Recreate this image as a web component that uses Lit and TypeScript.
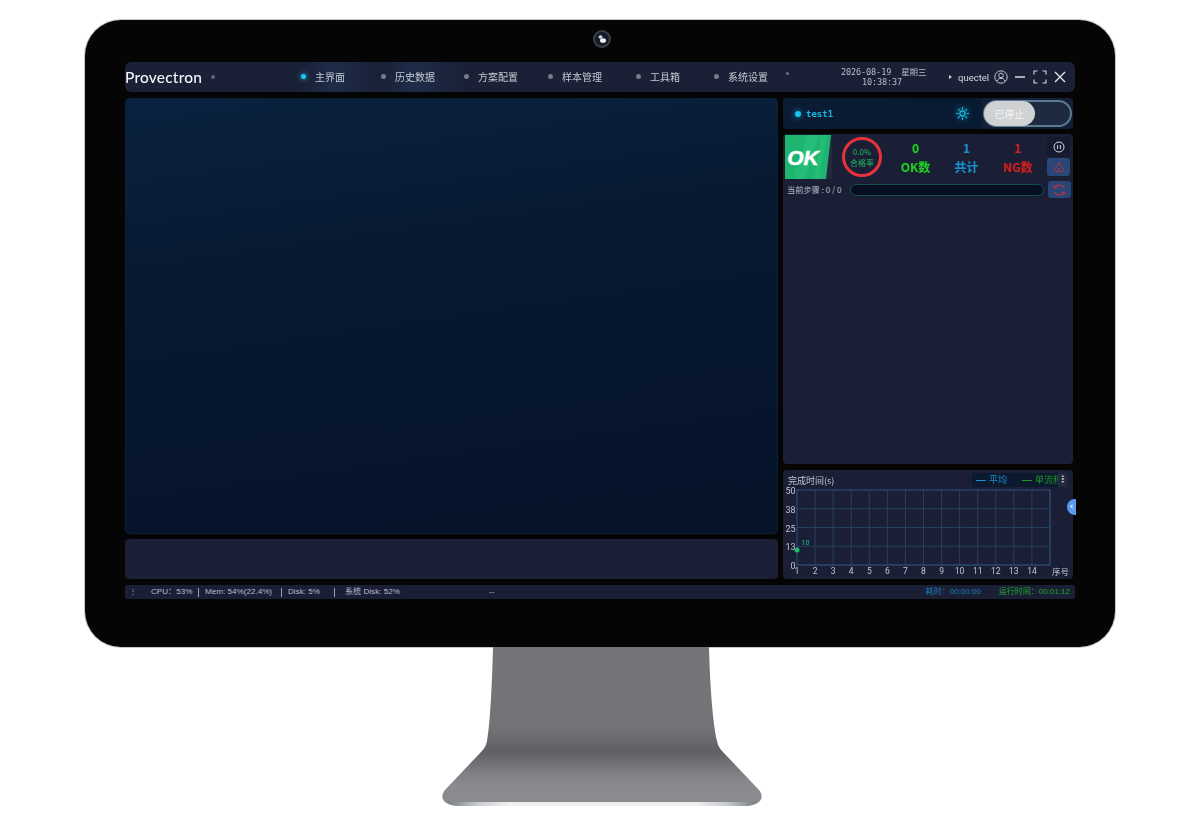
import { LitElement, html, css, svg } from "lit";
import { customElement } from "lit/decorators.js";

const NAV = ["主界面", "历史数据", "方案配置", "样本管理", "工具箱", "系统设置"];
const CJK = css`"Noto Sans CJK SC", "Noto Sans", sans-serif`;

@customElement("app-root")
export class AppRoot extends LitElement {
  static styles = css`
    :host { display: block; width: 1200px; height: 830px; background: #fff; overflow: hidden; font-family: "Roboto", "Noto Sans CJK SC", sans-serif; color: #c9cdd6; }
    * { box-sizing: border-box; }
    .monitor { width: 1030px; height: 627px; margin: 20px 0 0 85px; background: #050505; border-radius: 36px; box-shadow: 0 0 0 1px #c9c9c9; padding: 10px 40px 0; display: flex; flex-direction: column; }
    .camera { width: 18px; height: 18px; align-self: center; margin: 0 0 14px 4px; flex: none; display: block; filter: blur(0.4px); }
    .screen { width: 950px; display: flex; flex-direction: column; gap: 6px; filter: blur(0.35px); }

    .top { height: 30px; border-radius: 6px; background: #1a2036; display: flex; align-items: center; position: relative; overflow: hidden; }
    .logo { width: 88px; font: 500 15.5px "Lato", sans-serif; color: #f2f4f8; letter-spacing: 0.2px; display: flex; align-items: center; flex: none; }
    .logo i { width: 4px; height: 4px; background: #5d6474; border-radius: 50%; margin-left: 9px; flex: none; }
    .nav { display: grid; grid-template-columns: 80px 83px 84px 88px 78px 75px; margin-left: 88px; flex: none; }
    .nav-item { display: flex; align-items: center; gap: 9px; font: 10px ${CJK}; color: #c5c9d1; position: relative; height: 30px; padding-bottom: 1px; }
    .nav-item::before { content: ""; width: 5px; height: 5px; border-radius: 50%; background: #767c88; flex: none; }
    .nav-item.on::before { background: #1ec4f4; box-shadow: 0 0 5px #1ec4f4; }
    .nav-item.on, .nav-item.glow { background: linear-gradient(90deg, transparent, rgba(40,90,140,.22) 40%, transparent); }
    .tiny { width: 3px; height: 3px; border-radius: 50%; background: #6a7080; margin-left: -3px; margin-top: -8px; flex: none; }
    .clock { margin-left: 52px; width: 82px; font: 8.5px/10px "DejaVu Sans Mono", ${CJK}; color: #b9bec8; text-align: center; white-space: pre; letter-spacing: -.1px; flex: none; }
    .user { margin-left: 26px; display: flex; align-items: center; font: 9.5px "Roboto", sans-serif; color: #d5d8de; flex: none; }
    .user b { width: 0; height: 0; border-left: 3px solid #d5d8de; border-top: 2px solid transparent; border-bottom: 2px solid transparent; margin-right: 6px; }
    .user svg { margin-left: 5px; }
    .win { display: flex; align-items: center; gap: 6px; margin-left: 6px; flex: none; }
    .win svg { display: block; }
    .win .fs { margin-left: 1px; }

    .body { height: 481px; display: grid; grid-template-columns: 653px 290px; gap: 5px; }
    .col { display: flex; flex-direction: column; min-width: 0; }
    .col.l { gap: 5px; }
    .col.r { gap: 5px; position: relative; }
    .main { height: 436px; border-radius: 4px; background: linear-gradient(172deg, #0a2240 0%, #07182f 40%, #051329 100%); border: 1px solid #0a2038; }
    .lower { height: 40px; border-radius: 4px; background: #1a1f35; }

    .head { height: 31px; border-radius: 4px; background: linear-gradient(90deg, #0a1b33, #081a32 68%, #141e36 69%); display: flex; align-items: center; padding: 0 1px 0 12px; }
    .pulse { width: 6px; height: 6px; border-radius: 50%; background: #17c4ec; box-shadow: 0 0 5px 2px rgba(23,196,236,.3); flex: none; }
    .name { font: bold 9px "DejaVu Sans Mono", monospace; color: #17b8dd; margin-left: 5px; flex: 1; }
    .sun { margin-right: 14px; filter: drop-shadow(0 0 3px #17b8dd); display: block; }
    .switch { width: 89px; height: 27px; border-radius: 14px; border: 2px solid #5c7d92; background: #1e2a40; flex: none; display: flex; }
    .knob { width: 51px; margin: -1px 0 -1px -1px; border-radius: 13px; background: #cfd1d3; color: #f4f5f6; font: 10px/25px ${CJK}; text-align: center; }

    .card { height: 330px; border-radius: 4px; background: #1a1f35; padding: 1px 3px 0 2px; display: flex; flex-direction: column; gap: 2px; }
    .result { display: flex; height: 44px; align-items: center; }
    .ok { width: 47px; height: 44px; flex: none; display: block; }
    .gauge { width: 40px; height: 40px; border-radius: 50%; border: 3px solid #e7313c; margin-left: 10px; display: flex; flex-direction: column; align-items: center; justify-content: center; font: 8px/11px ${CJK}; color: #21b25e; flex: none; }
    .stats { display: grid; grid-template-columns: 51px 51px 51px; margin-left: 8px; flex: none; }
    .stat { display: flex; flex-direction: column; align-items: center; font: 700 12px/18px ${CJK}; gap: 1px; }
    .stat.g { color: #1fd01f; } .stat.b { color: #1a8fd0; } .stat.n { color: #d01e1e; }
    .tools { margin-left: 4px; width: 23px; display: flex; flex-direction: column; gap: 1px; flex: none; align-self: flex-start; margin-top: 2px; }
    .tool { height: 18px; border-radius: 3px; background: #2a4677; display: flex; align-items: center; justify-content: center; }
    .tool.dark { height: 20px; background: #161a2e; }
    .step { display: flex; align-items: center; font: 8.2px ${CJK}; color: #b8bcc6; height: 17px; padding-left: 2px; }
    .step-label { width: 63px; white-space: nowrap; flex: none; padding-bottom: 1px; }
    .bar { width: 194px; height: 12px; border-radius: 6px; border: 1px solid #12504f; background: #060f20; flex: none; }
    .step .tool { margin-left: 4px; width: 23px; height: 17px; flex: none; }

    .chart { height: 109px; margin-top: 1px; border-radius: 4px; background: #1a1f35; }
    .chart-head { height: 16px; display: flex; justify-content: space-between; padding: 3px 6px 0 5px; }
    .title { font: 9px/15px ${CJK}; color: #c2c6cf; }
    .legend { width: 95px; height: 14px; border-radius: 2px; background: #0c1a30; display: flex; align-items: center; font: 9px/14px ${CJK}; white-space: nowrap; padding-left: 4px; }
    .legend-items { width: 82px; display: flex; overflow: hidden; flex: none; }
    .legend span { display: inline-flex; align-items: center; gap: 3px; flex: none; }
    .legend i { width: 10px; height: 1px; background: currentColor; display: block; }
    .legend .avg { color: #1a8fd0; width: 46px; } .legend .single { color: #1c9a22; }
    .more { width: 9px; height: 14px; background: #232a3d; color: #d5d8de; font: bold 9px/13px "DejaVu Sans", sans-serif; text-align: center; flex: none; }
    .chart svg { display: block; }
    .chart text { font-family: "Roboto", ${CJK}; }
    .side { position: absolute; right: -3px; top: 401px; width: 9px; height: 16px; border-radius: 8px 0 0 8px; background: #5a9bf0; color: #fff; font: bold 9px/15px "DejaVu Sans", sans-serif; text-align: center; }

    .status { height: 14px; border-radius: 2px; background: #1a1f35; display: flex; align-items: center; font: 8.1px/14px "Liberation Sans", ${CJK}; color: #b9bdc7; white-space: nowrap; position: relative; }
    .status .m { width: 26px; padding-left: 4px; flex: none; }
    .status .sec { flex: none; }
    .status .cpu { width: 47px; }
    .status .mem { width: 82px; padding-left: 6px; }
    .status .disk { width: 52px; padding-left: 6px; }
    .status .sys { width: 154px; padding-left: 10px; }
    .status .sep { width: 1px; height: 9px; background: #9ca1ac; flex: none; }
    .status .right { margin-left: auto; display: flex; gap: 18px; padding-right: 5px; font: 8px/14px "Liberation Sans", ${CJK}; }
    .status .t1 { color: #1a7bb4; } .status .t2 { color: #1fa42a; }

    .stand { display: block; width: 1200px; height: 183px; }
  `;

  private grid() {
    const xs = Array.from({ length: 15 }, (_, i) => 14 + i * 18.07);
    const ys = [4, 22.75, 41.5, 60.25, 79];
    const yl = ["50", "38", "25", "13", "0"];
    return svg`
      ${xs.slice(1).map((x) => svg`<line x1=${x} x2=${x} y1="4" y2="79" stroke="#25405f" stroke-width="1"/>`)}
      ${ys.slice(1).map((y) => svg`<line x1="14" x2="267" y1=${y} y2=${y} stroke="#25405f" stroke-width="1"/>`)}
      <rect x="14" y="4" width="253" height="75" fill="none" stroke="#2a4a70" stroke-width="1.2"/>
      ${yl.map((t, i) => svg`<text x="12.5" y=${ys[i] + 4} text-anchor="end" font-size="9" fill="#c2c6cf">${t}</text>`)}
      ${xs.slice(0, 14).map((x, i) => svg`<text x=${x} y="88" text-anchor="middle" font-size="8.5" fill="#c2c6cf">${i + 1}</text>`)}
      <text x="269" y="89" font-size="8.5" fill="#c2c6cf">序号</text>
      <circle cx="14" cy="64" r="2.5" fill="#16c06c"/>
      <text x="18.5" y="59" font-size="7" fill="#16c08c">10</text>
    `;
  }

  render() {
    return html`
      <div class="monitor">
        <svg class="camera" viewBox="0 0 18 18">
          <circle cx="9" cy="9" r="9" fill="#3a3f4a"/>
          <circle cx="9" cy="9" r="7" fill="#141c2a"/>
          <ellipse cx="7.5" cy="7" rx="2" ry="1.7" fill="#cfd8e2"/>
          <ellipse cx="10" cy="10.5" rx="3" ry="2.3" fill="#f4f6f8"/>
        </svg>
        <div class="screen">
          <div class="top">
            <div class="logo">Provectron<i></i></div>
            <div class="nav">
              ${NAV.map((n, i) => html`<div class="nav-item ${i === 0 ? "on" : i === 1 ? "glow" : ""}">${n}</div>`)}
            </div>
            <div class="tiny"></div>
            <div class="clock">2026-08-19  星期三
10:38:37</div>
            <div class="user"><b></b>quectel
              <svg width="14" height="14" viewBox="0 0 14 14" fill="none" stroke="#c9ccd3" stroke-width="1"><circle cx="7" cy="7" r="6.2"/><circle cx="7" cy="5.4" r="2.3"/><path d="M2.9 11.2c.8-2 2.3-2.9 4.1-2.9s3.3.9 4.1 2.9"/></svg>
            </div>
            <div class="win">
              <svg width="12" height="12" viewBox="0 0 12 12" stroke="#d8dbe1" stroke-width="1.6"><path d="M1 6h10"/></svg>
              <svg class="fs" width="14" height="14" viewBox="0 0 14 14" fill="none" stroke="#d8dbe1" stroke-width="1.1"><path d="M1 4.5V1h3.5M9.5 1H13v3.5M13 9.5V13H9.5M4.5 13H1V9.5"/></svg>
              <svg width="14" height="14" viewBox="0 0 14 14" fill="none" stroke="#e2e4e9" stroke-width="1.4"><path d="M2 2l10 10M12 2L2 12"/></svg>
            </div>
          </div>

          <div class="body">
            <div class="col l">
              <div class="main"></div>
              <div class="lower"></div>
            </div>
            <div class="col r">
              <div class="head">
                <span class="pulse"></span><span class="name">test1</span>
                <svg class="sun" width="13" height="13" viewBox="0 0 13 13" fill="none" stroke="#1cc0e4" stroke-width="1.1"><circle cx="6.5" cy="6.5" r="2.6"/><path d="M6.5 0v2.4M6.5 10.6V13M0 6.5h2.4M10.6 6.5H13M1.9 1.9l1.7 1.7M9.4 9.4l1.7 1.7M11.1 1.9L9.4 3.6M3.6 9.4l-1.7 1.7"/></svg>
                <div class="switch"><div class="knob">已停止</div></div>
              </div>

              <div class="card">
                <div class="result">
                  <svg class="ok" viewBox="0 0 47 44"><rect width="47" height="44" fill="#232a3f"/><path d="M0 0h46l-5 44H0z" fill="#1fb470"/><path d="M22 0h12L20 44H8zM36 0h6L34 44h-5z" fill="#27c07c" opacity=".7"/><text x="18" y="30" text-anchor="middle" font-family="Liberation Sans, sans-serif" font-weight="700" font-style="italic" font-size="21" fill="#fff" stroke="#fff" stroke-width=".5">OK</text></svg>
                  <div class="gauge"><span>0.0%</span><span>合格率</span></div>
                  <div class="stats">
                    <div class="stat g"><span>0</span><span>OK数</span></div>
                    <div class="stat b"><span>1</span><span>共计</span></div>
                    <div class="stat n"><span>1</span><span>NG数</span></div>
                  </div>
                  <div class="tools">
                    <div class="tool dark"><svg width="12" height="12" viewBox="0 0 12 12" fill="none" stroke="#d6d9df" stroke-width="1"><circle cx="6" cy="6" r="5"/><path d="M4.6 4v4M7.4 4v4"/></svg></div>
                    <div class="tool"><svg width="12" height="12" viewBox="0 0 12 12" fill="none" stroke="#b3343f" stroke-width="1"><path d="M6 1.5L8 5l2.5 2c.6 1.8-.8 3.5-2.5 3.5H4C2.2 10.5 1 9 1.5 7L4 5z"/><path d="M4 8h4"/></svg></div>
                  </div>
                </div>
                <div class="step">
                  <span class="step-label">当前步骤 : 0 / 0</span>
                  <div class="bar"></div>
                  <div class="tool"><svg width="13" height="12" viewBox="0 0 13 12" fill="none" stroke="#c0323d" stroke-width="1.1"><path d="M2 4c.6-2 2.3-3 4.5-3S10.5 2 11 4M11 8c-.6 2-2.3 3-4.5 3S2.5 10 2 8"/><path d="M1 1.5L2 4l2.5-.5M12 10.5L11 8l-2.5.5"/></svg></div>
                </div>
              </div>

              <div class="chart">
                <div class="chart-head">
                  <div class="title">完成时间(s)</div>
                  <div class="legend">
                    <div class="legend-items">
                      <span class="avg"><i></i>平均</span>
                      <span class="single"><i></i>单流程</span>
                    </div>
                    <div class="more">⋮</div>
                  </div>
                </div>
                <svg width="290" height="93" viewBox="0 0 290 93">${this.grid()}</svg>
              </div>
              <div class="side">‹</div>
            </div>
          </div>

          <div class="status">
            <span class="m">⋮</span>
            <span class="sec cpu">CPU：53%</span><span class="sep"></span>
            <span class="sec mem">Mem: 54%(22.4%)</span><span class="sep"></span>
            <span class="sec disk">Disk: 5%</span><span class="sep"></span>
            <span class="sec sys">系统 Disk: 52%</span>
            <span class="sec">--</span>
            <div class="right"><span class="t1">耗时：00:00:00</span><span class="t2">运行时间：00:01:12</span></div>
          </div>
        </div>
      </div>
      <svg class="stand" viewBox="0 0 1200 183">
        <defs>
          <linearGradient id="st" x1="0" y1="0" x2="0" y2="1">
            <stop offset="0" stop-color="#747578"/><stop offset=".52" stop-color="#727376"/>
            <stop offset=".66" stop-color="#5f6063"/><stop offset=".8" stop-color="#7f8083"/>
            <stop offset=".88" stop-color="#8a8b8e"/><stop offset="1" stop-color="#8a8b8e"/>
          </linearGradient>
          <linearGradient id="hl" x1="0" y1="0" x2="1" y2="0">
            <stop offset="0" stop-color="#777a80"/><stop offset=".1" stop-color="#c9ccd0"/><stop offset=".2" stop-color="#f0f0f0"/>
            <stop offset=".8" stop-color="#f0f0f0"/><stop offset=".9" stop-color="#c9ccd0"/><stop offset="1" stop-color="#777a80"/>
          </linearGradient>
        </defs>
        <path d="M493 0H709C710 40 713 78 717 94C718 99 720 102 723 105L759 143C764 149 762 156 752 158H452C442 156 440 149 445 143L481 105C484 102 486 99 487 94C490 78 492 40 493 0Z" fill="url(#st)"/>
        <path d="M447 154C449 157 452 159 458 159H746C752 159 755 157 757 154C753 155 750 155 746 155H458C454 155 451 155 447 154Z" fill="url(#hl)"/>
      </svg>
    `;
  }
}
